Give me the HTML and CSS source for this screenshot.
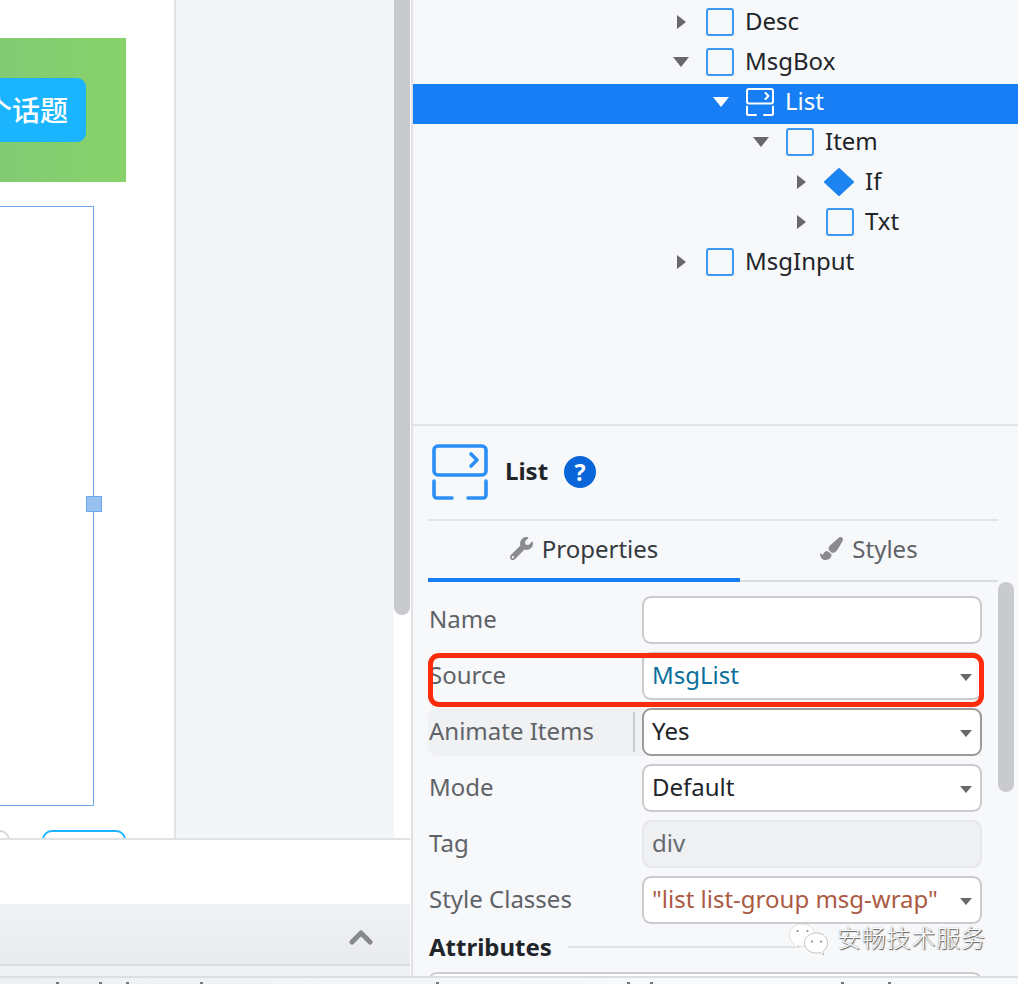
FILE: index.html
```html
<!DOCTYPE html>
<html lang="en">
<head>
<meta charset="utf-8">
<title>List properties</title>
<link rel="stylesheet" href="styles.css">
</head>
<body>
<div class="app">
  <div class="main">
    <section class="left">
      <div class="workspace">
        <div class="canvas">
          <div class="banner">
            <div class="cta">进入下一个话题</div>
          </div>
          <div class="selected"><span class="handle"></span></div>
          <div class="canvas-bottom">
            <span class="ghost-round"></span>
            <span class="ghost-btn"></span>
          </div>
        </div>
        <div class="gutter"></div>
        <div class="track"><div class="thumb"></div></div>
      </div>
      <div class="blank"></div>
      <div class="bar">
        <svg class="chev-up" viewBox="0 0 24 16" aria-hidden="true"><path d="M3 13 12 4l9 9"/></svg>
      </div>
      <div class="bar-rest"></div>
    </section>

    <section class="right">
      <div class="tree">
        <div class="node l0"><span class="slot"><i class="caret-r"></i></span><span class="box"></span><span class="name">Desc</span></div>
        <div class="node l0"><span class="slot"><i class="caret-d"></i></span><span class="box"></span><span class="name">MsgBox</span></div>
        <div class="node l1 on"><span class="slot"><i class="caret-d"></i></span>
          <svg class="ico-list" viewBox="0 0 28 28" aria-hidden="true"><rect x="1" y="1" width="26" height="14.5" rx="2"/><path d="M19.5 5l3 3-3 3M1 18.5V25.5A1.5 1.5 0 0 0 2.500 27H10M18 27H25.500A1.500 1.500 0 0 0 27 25.500V18.500"/></svg>
          <span class="name">List</span></div>
        <div class="node l2"><span class="slot"><i class="caret-d"></i></span><span class="box"></span><span class="name">Item</span></div>
        <div class="node l3"><span class="slot"><i class="caret-r"></i></span>
          <svg class="ico-if" viewBox="0 0 28 28" aria-hidden="true"><polygon points="13,1 27,14 13,27 -1,14"/></svg>
          <span class="name">If</span></div>
        <div class="node l3"><span class="slot"><i class="caret-r"></i></span><span class="box"></span><span class="name">Txt</span></div>
        <div class="node l0"><span class="slot"><i class="caret-r"></i></span><span class="box"></span><span class="name">MsgInput</span></div>
      </div>

      <div class="inspector">
        <header class="head">
          <svg class="ico-list big" viewBox="0 0 28 28" aria-hidden="true"><rect x="1" y="1" width="26" height="14.5" rx="2"/><path d="M19.500 5l3 3-3 3M1 18.500V25.500A1.500 1.500 0 0 0 2.500 27H10M18 27H25.500A1.500 1.500 0 0 0 27 25.500V18.500"/></svg>
          <strong class="head-title">List</strong>
          <span class="help">?</span>
        </header>
        <nav class="tabs">
          <div class="tab active">
            <svg class="tab-ico" viewBox="0 0 512 512" aria-hidden="true"><path d="M507.73 109.1c-2.24-9.03-13.54-12.09-20.12-5.51l-74.36 74.36-67.88-11.31-11.31-67.88 74.36-74.36c6.62-6.62 3.43-17.9-5.66-20.16-47.38-11.74-99.55.91-136.58 37.93-39.64 39.64-50.55 97.1-34.05 147.2L18.74 402.76c-24.99 24.99-24.99 65.51 0 90.5 24.99 24.99 65.51 24.99 90.5 0l213.21-213.21c50.12 16.71 107.47 5.68 147.37-34.22 37.07-37.07 49.7-89.32 37.91-136.73zM64 472c-13.25 0-24-10.75-24-24 0-13.26 10.75-24 24-24s24 10.74 24 24c0 13.25-10.75 24-24 24z"/></svg>
            <span>Properties</span>
          </div>
          <div class="tab">
            <svg class="tab-ico" viewBox="0 0 512 512" aria-hidden="true"><path d="M167.02 309.34c-40.12 2.58-76.53 17.86-97.19 72.3-2.35 6.21-8 9.98-14.59 9.98-11.11 0-45.46-27.67-55.25-34.35C0 439.62 37.93 512 128 512c75.86 0 128-43.77 128-120.19 0-3.11-.65-6.08-.97-9.13l-88.01-73.34zM457.89 0c-15.16 0-29.37 6.71-40.21 16.45C213.27 199.05 192 203.34 192 257.09c0 13.7 3.25 26.76 8.73 38.7l63.82 53.18c7.21 1.8 14.64 3.03 22.39 3.03 62.11 0 98.11-45.47 211.16-256.46 7.38-14.35 13.9-29.85 13.9-45.99C512 20.64 486 0 457.89 0z"/></svg>
            <span>Styles</span>
          </div>
        </nav>
        <div class="props">
          <div class="form">
            <div class="field">
              <label class="lbl">Name</label>
              <div class="ctl"></div>
            </div>
            <div class="field source">
              <label class="lbl">Source</label>
              <div class="ctl select bound">MsgList</div>
              <span class="redbox"></span>
            </div>
            <div class="field hovered">
              <label class="lbl">Animate Items</label>
              <div class="ctl select focus">Yes</div>
            </div>
            <div class="field">
              <label class="lbl">Mode</label>
              <div class="ctl select">Default</div>
            </div>
            <div class="field">
              <label class="lbl">Tag</label>
              <div class="ctl readonly">div</div>
            </div>
            <div class="field">
              <label class="lbl">Style Classes</label>
              <div class="ctl select literal">"list list-group msg-wrap"</div>
            </div>
            <div class="section-head"><strong>Attributes</strong><span class="rule"></span></div>
            <div class="ctl wide"></div>
          </div>
          <div class="props-scroll"></div>
        </div>
      </div>
    </section>
  </div>
  <div class="foot"></div>

  <div class="watermark">
    <svg class="wx" viewBox="0 0 40 34" aria-hidden="true">
      <path class="bubble" d="M13 1C6 1 .5 5.600 .5 12c0 3.800 2 6.800 5 9L4.500 25l4.500-2.300c1.400.4 2.800.6 4.300.6 7 0 12.500-5 12.500-11.300S20 1 13 1z"/>
      <circle cx="8.500" cy="8" r="1.100"/><circle cx="18.500" cy="8" r="1.100"/>
      <path class="bubble front" d="M27.500 10C20.500 10 15.500 14.500 15.500 20s5 10 12 10c1.200 0 2.400-.2 3.600-.5L35 32l-.9-3.700c2.700-1.900 4.400-4.800 4.400-8.300 0-5.500-4-10-11-10z"/>
      <circle cx="23" cy="18.500" r="1.100"/><circle cx="32" cy="18.500" r="1.100"/>
    </svg>
    <span class="wm-text">安畅技术服务</span>
  </div>
</div>
</body>
</html>
```
FILE: styles.css
```css
* { box-sizing: border-box; }
html, body { margin: 0; padding: 0; }
body {
  width: 1018px;
  height: 984px;
  overflow: hidden;
  background: #fff;
  font-family: "Noto Sans", "Noto Sans CJK SC", sans-serif;
  font-size: 24px;
  color: #212529;
}
.app { position: relative; width: 1018px; height: 984px; overflow: hidden; }
.main { display: flex; height: 976px; overflow: hidden; }

/* Left column */
.left {
  width: 413px;
  flex: none;
  padding-right: 1px;
  border-right: 2px solid #dfe1e4;
  display: flex;
  flex-direction: column;
  background: #fff;
}
.workspace { display: flex; height: 838px; width: 410px; flex: none; }
.canvas { width: 174px; flex: none; background: #fff; overflow: hidden; display: flex; flex-direction: column; }
.banner {
  margin-top: 38px;
  width: 126px;
  height: 144px;
  flex: none;
  padding-right: 40px;
  display: flex;
  align-items: center;
  justify-content: flex-end;
  background: linear-gradient(90deg, #83cb74 0%, #87d26a 100%);
}
.cta {
  width: 86px;
  height: 64px;
  flex: none;
  background: #1ab4ff;
  border-radius: 0 9px 9px 0;
  color: #fff;
  font-family: "Noto Sans CJK SC", sans-serif;
  font-weight: 500;
  font-size: 28px;
  line-height: 62px;
  padding-right: 18px;
  display: flex;
  justify-content: flex-end;
  white-space: nowrap;
  overflow: hidden;
}
.selected {
  position: relative;
  margin-top: 24px;
  width: 94px;
  height: 600px;
  flex: none;
  border: 1px solid #6ea8f0;
  border-left: 0;
}
.handle {
  position: absolute;
  right: -9px;
  top: 289px;
  width: 16px;
  height: 16px;
  background: #96c1f1;
  border: 1px solid #6ea8f0;
}
.canvas-bottom { margin-top: 24px; height: 8px; display: flex; gap: 32px; flex: none; overflow: hidden; }
.ghost-round { width: 10px; height: 30px; flex: none; border: 2px solid #d3d5d9; border-left: 0; border-radius: 0 10px 10px 0; }
.ghost-btn { width: 84px; height: 30px; flex: none; border: 2px solid #1ab4ff; border-radius: 10px; }
.gutter { width: 220px; flex: none; background: #f4f5f7; border-left: 2px solid #dfe3e6; }
.track { width: 16px; flex: none; background: #fff; }
.thumb { height: 615px; background: #c9cacd; border-radius: 0 0 8px 8px; }
.blank { height: 66px; width: 410px; flex: none; border-top: 2px solid #e1e2e4; background: #fff; }
.bar {
  height: 62px;
  width: 410px;
  flex: none;
  background: linear-gradient(#f0f1f3, #eaebed);
  border-bottom: 2px solid #dcdde0;
  display: flex;
  align-items: center;
  justify-content: flex-end;
  padding: 0 37px 0 0;
}
.chev-up { width: 24px; height: 16px; fill: none; stroke: #87888b; stroke-width: 5; stroke-linecap: round; stroke-linejoin: round; margin-top: 6px; }
.bar-rest { flex: 1; width: 410px; background: #f0f1f3; }

/* Right column */
.right { flex: 1; min-width: 0; background: #f7f8fa; display: flex; flex-direction: column; }
.tree { flex: none; padding-top: 4px; border-bottom: 2px solid #e1e3e5; box-sizing: content-box; height: 420px; }
.node { height: 40px; display: flex; align-items: center; padding-bottom: 4px; }
.l0 { padding-left: 260px; }
.l1 { padding-left: 300px; }
.l2 { padding-left: 340px; }
.l3 { padding-left: 380px; }
.node.on { background: #177ef5; color: #fff; }
.slot { width: 16px; flex: none; display: flex; justify-content: center; margin-right: 17px; }
.caret-r { width: 0; height: 0; border-left: 9px solid #68686b; border-top: 7px solid transparent; border-bottom: 7px solid transparent; }
.caret-d { width: 0; height: 0; border-top: 10px solid #68686b; border-left: 8px solid transparent; border-right: 8px solid transparent; }
.on .caret-d { border-top-color: #fff; }
.box { width: 28px; height: 28px; flex: none; border: 2px solid #3d97f5; border-radius: 3px; }
.name { margin-left: 11px; line-height: 36px; position: relative; top: -1px; }
.ico-list { width: 28px; height: 28px; flex: none; fill: none; stroke: currentColor; stroke-width: 2; stroke-linecap: round; stroke-linejoin: round; }
.ico-if { width: 28px; height: 28px; flex: none; overflow: visible; fill: #1c84f0; stroke: #1c84f0; stroke-width: 2; stroke-linejoin: round; }

.inspector { flex: 1; min-height: 0; padding-left: 15px; display: flex; flex-direction: column; }
.head { height: 93px; flex: none; width: 570px; display: flex; align-items: flex-start; padding: 18px 0 0 4px; }
.ico-list.big { width: 56px; height: 56px; color: #2b8ff5; stroke-width: 1.8; }
.head-title { margin-left: 17px; font-weight: 700; line-height: 54px; }
.help {
  margin: 12px 0 0 16px;
  width: 32px;
  height: 32px;
  border-radius: 50%;
  background: #0a66d8;
  color: #fff;
  font-weight: 700;
  font-size: 23px;
  line-height: 32px;
  text-align: center;
}
.tabs { width: 570px; height: 63px; flex: none; display: flex; border-top: 2px solid #e1e3e5; border-bottom: 2px solid #dcdde0; }
.tab { width: 258px; height: 59px; flex: none; display: flex; align-items: center; justify-content: center; gap: 9px; color: #5f6368; padding-bottom: 4px; }
.tab.active { width: 312px; height: 61px; color: #343a40; border-bottom: 4px solid #177ef5; padding-bottom: 2px; }
.tab-ico { width: 23px; height: 23px; fill: #8a8b8e; flex: none; margin-top: -1px; }
.props { flex: 1; min-height: 0; display: flex; overflow: hidden; }
.form { width: 554px; flex: none; margin-right: 16px; padding-top: 14px; display: flex; flex-direction: column; gap: 8px; }
.props-scroll { width: 16px; height: 210px; flex: none; background: #c9cacd; border-radius: 8px; }
.field { position: relative; display: flex; height: 48px; flex: none; align-items: center; }
.lbl { width: 214px; flex: none; padding: 0 0 4px 1px; color: #5f6368; }
.ctl {
  position: relative;
  width: 340px;
  height: 48px;
  flex: none;
  background: #fff;
  border: 2px solid #cbcccf;
  border-radius: 9px;
  padding-left: 8px;
  line-height: 41px;
  white-space: nowrap;
}
.select::after {
  content: "";
  position: absolute;
  right: 8px;
  top: 20px;
  border-top: 7px solid #68686b;
  border-left: 6px solid transparent;
  border-right: 6px solid transparent;
}
.bound { color: #0b6f9c; }
.literal { color: #ab5a44; }
.focus { border-color: #9a9b9d; }
.readonly { background: #eff0f2; border-color: #e6e7e9; color: #666a6e; }
.hovered { background: #f0f1f3; border-radius: 9px 0 0 9px; }
.hovered .lbl { border-right: 2px solid #cbcccf; width: 207px; height: 40px; padding-bottom: 0; line-height: 38px; margin-right: 7px; }
.redbox {
  position: absolute;
  left: 0;
  right: -2px;
  top: 1px;
  bottom: -7px;
  border: 5px solid #fe2c0a;
  border-radius: 11px;
}
.section-head { display: flex; align-items: center; gap: 16px; height: 30px; flex: none; padding: 0 0 0 1px; }
.section-head strong { font-weight: 700; position: relative; top: -1px; }
.rule { width: 232px; flex: none; height: 2px; background: #e1e3e5; }
.wide { width: 554px; margin-top: 2px; }

.foot {
  height: 8px;
  border-top: 2px solid #dddee1;
  background:
    linear-gradient(#77787a, #77787a) 56px 4px / 3px 2px no-repeat,
    linear-gradient(#77787a, #77787a) 99px 4px / 3px 2px no-repeat,
    linear-gradient(#77787a, #77787a) 126px 4px / 3px 2px no-repeat,
    linear-gradient(#77787a, #77787a) 200px 4px / 3px 2px no-repeat,
    linear-gradient(#77787a, #77787a) 436px 4px / 3px 2px no-repeat,
    linear-gradient(#77787a, #77787a) 627px 4px / 3px 2px no-repeat,
    linear-gradient(#77787a, #77787a) 650px 4px / 3px 2px no-repeat,
    linear-gradient(#77787a, #77787a) 841px 4px / 3px 2px no-repeat,
    linear-gradient(#77787a, #77787a) 888px 4px / 3px 2px no-repeat,
    linear-gradient(90deg, #eeeff1, #f7f8fa 60%);
}

.watermark { position: absolute; left: 789px; top: 922px; display: flex; align-items: center; gap: 8px; }
.wx { width: 40px; height: 34px; flex: none; fill: #8a8b8d; }
.wx .bubble { fill: #fff; stroke: #c4c5c7; stroke-width: .5; }
.wx .front { stroke: #8b8c8e; }
.wm-text {
  font-family: "Noto Sans CJK SC", sans-serif;
  font-weight: 300;
  font-size: 24px;
  line-height: 30px;
  letter-spacing: .8px;
  color: #fff;
  text-shadow: 1px 1px 1px #555, 0 0 1px #777;
  margin-bottom: 5px;
}
```
